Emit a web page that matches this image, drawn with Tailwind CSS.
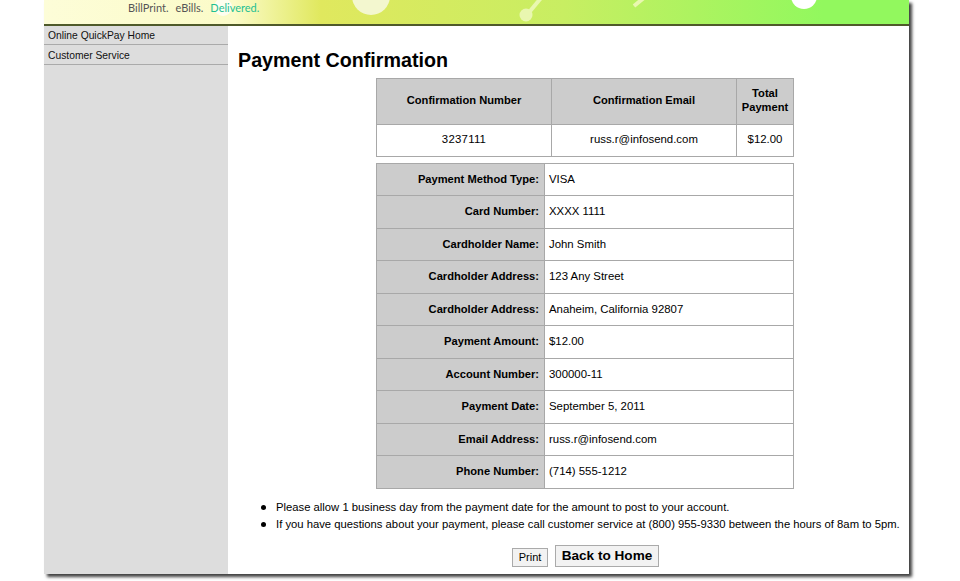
<!DOCTYPE html>
<html>
<head>
<meta charset="utf-8">
<script src="https://cdn.jsdelivr.net/npm/@tailwindcss/browser@4"></script>
</head>
<body class="bg-white font-['Liberation_Sans',Arial,sans-serif] text-black overflow-hidden">
<div class="w-[960px] h-[581px] overflow-hidden">
  <div class="ml-[44px] w-[865px] h-[574px] bg-white flex flex-col shadow-[3px_3px_3px_rgba(0,0,0,0.75)]">
    <header class="relative h-[26px] shrink-0 overflow-hidden border-b-2 border-[#4f5a2a] bg-[linear-gradient(90deg,#fdfdd8_0%,#fbfbc8_22%,#e0e85e_32%,#c8ee62_60%,#92f85e_90%,#92f85e_100%)]">
      <svg class="absolute left-0 top-0" width="865" height="24" viewBox="0 0 865 24" fill="none">
        <circle cx="327" cy="-4" r="19" fill="#f3f7cf"/>
        <circle cx="179" cy="7" r="9" fill="#ffffff" fill-opacity="0.7"/>
        <path d="M482 16L497 -2" stroke="#e9f7b0" stroke-width="4"/>
        <circle cx="482" cy="15" r="6.5" fill="#e9f7b0"/>
        <path d="M590 6L601 -3" stroke="#e9f7b0" stroke-width="4"/>
        <circle cx="760" cy="-4" r="13" fill="#ffffff"/>
      </svg>
      <div class="absolute left-[84px] top-[0px] text-[11px] leading-[16px] font-['Lato',sans-serif] whitespace-nowrap">
        <span class="text-[#555]">BillPrint.</span><span class="text-[#555] ml-[7px]">eBills.</span><span class="text-[#1fbf94] ml-[7px]">Delivered.</span>
      </div>
    </header>
    <div class="flex flex-1 min-h-0">
      <nav class="w-[184px] shrink-0 bg-[#dddddd] text-[10.3px] text-[#111]">
        <div class="h-[19px] pl-1 leading-[20px] border-b border-[#aaaaaa]">Online QuickPay Home</div>
        <div class="h-[20px] pl-1 leading-[21px] border-b border-[#aaaaaa]">Customer Service</div>
      </nav>
      <main class="flex-1 min-w-0 pl-[10px] pt-[23px]">
        <h1 class="text-[19.7px] leading-[23px] font-bold">Payment Confirmation</h1>
        <table class="ml-[138px] mt-[6px] w-[417px] table-fixed border-collapse text-[11.4px]">
          <colgroup><col class="w-[175px]"><col class="w-[185px]"><col class="w-[57px]"></colgroup>
          <tr class="h-[45.5px] bg-[#cccccc] font-bold text-[11.15px] leading-[13.5px] text-center">
            <td class="border border-[#a8a8a8] pb-px">Confirmation Number</td>
            <td class="border border-[#a8a8a8] pb-px">Confirmation Email</td>
            <td class="border border-[#a8a8a8] pb-px">Total Payment</td>
          </tr>
          <tr class="h-[32px] text-center">
            <td class="border border-[#a8a8a8] tracking-[0.25px]">3237111</td>
            <td class="border border-[#a8a8a8]">russ.r@infosend.com</td>
            <td class="border border-[#a8a8a8]">$12.00</td>
          </tr>
        </table>
        <table class="ml-[138px] mt-[6px] w-[417px] table-fixed border-collapse text-[11.4px]">
          <colgroup><col class="w-[168px]"><col class="w-[249px]"></colgroup>
          <tr class="h-[32.5px]"><th class="border border-[#a8a8a8] bg-[#cccccc] text-[11.15px] text-right pr-[5px]">Payment Method Type:</th><td class="border border-[#a8a8a8] pl-[4px]">VISA</td></tr>
          <tr class="h-[32.5px]"><th class="border border-[#a8a8a8] bg-[#cccccc] text-[11.15px] text-right pr-[5px]">Card Number:</th><td class="border border-[#a8a8a8] pl-[4px]">XXXX 1111</td></tr>
          <tr class="h-[32.5px]"><th class="border border-[#a8a8a8] bg-[#cccccc] text-[11.15px] text-right pr-[5px]">Cardholder Name:</th><td class="border border-[#a8a8a8] pl-[4px]">John Smith</td></tr>
          <tr class="h-[32.5px]"><th class="border border-[#a8a8a8] bg-[#cccccc] text-[11.15px] text-right pr-[5px]">Cardholder Address:</th><td class="border border-[#a8a8a8] pl-[4px]">123 Any Street</td></tr>
          <tr class="h-[32.5px]"><th class="border border-[#a8a8a8] bg-[#cccccc] text-[11.15px] text-right pr-[5px]">Cardholder Address:</th><td class="border border-[#a8a8a8] pl-[4px]">Anaheim, California 92807</td></tr>
          <tr class="h-[32.5px]"><th class="border border-[#a8a8a8] bg-[#cccccc] text-[11.15px] text-right pr-[5px]">Payment Amount:</th><td class="border border-[#a8a8a8] pl-[4px]">$12.00</td></tr>
          <tr class="h-[32.5px]"><th class="border border-[#a8a8a8] bg-[#cccccc] text-[11.15px] text-right pr-[5px]">Account Number:</th><td class="border border-[#a8a8a8] pl-[4px]">300000-11</td></tr>
          <tr class="h-[32.5px]"><th class="border border-[#a8a8a8] bg-[#cccccc] text-[11.15px] text-right pr-[5px]">Payment Date:</th><td class="border border-[#a8a8a8] pl-[4px]">September 5, 2011</td></tr>
          <tr class="h-[32.5px]"><th class="border border-[#a8a8a8] bg-[#cccccc] text-[11.15px] text-right pr-[5px]">Email Address:</th><td class="border border-[#a8a8a8] pl-[4px]">russ.r@infosend.com</td></tr>
          <tr class="h-[32.5px]"><th class="border border-[#a8a8a8] bg-[#cccccc] text-[11.15px] text-right pr-[5px]">Phone Number:</th><td class="border border-[#a8a8a8] pl-[4px]">(714) 555-1212</td></tr>
        </table>
        <ul class="mt-[10px] ml-[23px] text-[11.27px] leading-[17px] whitespace-nowrap">
          <li class="flex items-center gap-[10px]"><span class="w-[5px] h-[5px] rounded-full bg-black"></span>Please allow 1 business day from the payment date for the amount to post to your account.</li>
          <li class="flex items-center gap-[10px]"><span class="w-[5px] h-[5px] rounded-full bg-black"></span>If you have questions about your payment, please call customer service at (800) 955-9330 between the hours of 8am to 5pm.</li>
        </ul>
        <div class="mt-[12.5px] ml-[274px] flex items-end gap-[7px]">
          <button class="h-[19px] w-[36px] border border-[#aaaaaa] bg-[#f2f2f2] text-[11px] leading-none">Print</button>
          <button class="h-[22px] w-[104px] border border-[#aaaaaa] bg-[#f2f2f2] text-[13.6px] font-bold leading-none">Back to Home</button>
        </div>
      </main>
    </div>
  </div>
</div>
</body>
</html>
